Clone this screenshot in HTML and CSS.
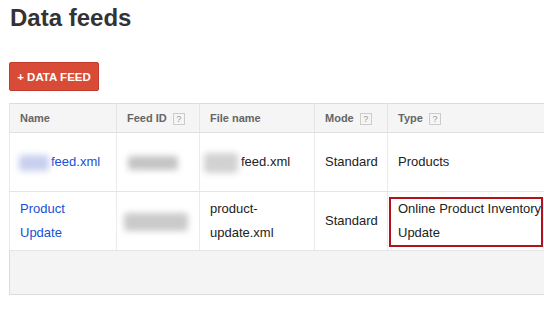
FILE: index.html
```html
<!DOCTYPE html>
<html>
<head>
<meta charset="utf-8">
<link rel="stylesheet" href="styles.css">
</head>
<body>
<div class="page">
  <h1 class="title">Data feeds</h1>
  <button class="add-btn">+ DATA FEED</button>
  <div class="table-clip">
  <table class="feeds">
    <colgroup>
      <col class="c-name"><col class="c-id"><col class="c-file"><col class="c-mode"><col class="c-type">
    </colgroup>
    <thead>
      <tr>
        <th>Name</th>
        <th>Feed ID <span class="help">?</span></th>
        <th>File name</th>
        <th>Mode <span class="help">?</span></th>
        <th>Type <span class="help">?</span></th>
      </tr>
    </thead>
    <tbody>
      <tr class="row">
        <td><span class="blob blob-name"></span><a class="link" href="#">feed.xml</a></td>
        <td><span class="blob blob-id"></span></td>
        <td><span class="blob blob-file"></span>feed.xml</td>
        <td>Standard</td>
        <td>Products</td>
      </tr>
      <tr class="row">
        <td class="wrap"><a class="link" href="#">Product Update</a></td>
        <td><span class="blob blob-id2"></span></td>
        <td class="wrap">product-update.xml</td>
        <td>Standard</td>
        <td class="wrap type-cell"><div class="type-text">Online Product Inventory Update</div><div class="highlight"></div></td>
      </tr>
      <tr class="footer-row">
        <td colspan="5"></td>
      </tr>
    </tbody>
  </table>
  </div>
</div>
</body>
</html>
```
FILE: styles.css
```css
html, body {
  margin: 0;
  padding: 0;
  background: #fff;
  overflow: hidden;
}
body {
  font-family: "Liberation Sans", Arial, sans-serif;
  color: #222;
}
.page {
  padding-left: 9px;
  width: 535px;
  overflow: hidden;
}
.title {
  margin: 4px 0 0 1px;
  font-size: 24px;
  line-height: 28px;
  font-weight: bold;
  color: #333;
}
.add-btn {
  display: block;
  margin-top: 30px;
  width: 90px;
  height: 29px;
  padding: 0;
  border: 1px solid #c43c2b;
  border-radius: 2px;
  background: #d84b37;
  color: #fff;
  font-family: "Liberation Sans", Arial, sans-serif;
  font-size: 11.5px;
  font-weight: bold;
  text-align: center;
}
.table-clip {
  margin-top: 12px;
  width: 535px;
  overflow: hidden;
}
.feeds {
  border-collapse: collapse;
  border: 1px solid #dcdcdc;
  table-layout: fixed;
  width: 600px;
  font-size: 13px;
}
.c-name { width: 107px; }
.c-id { width: 83px; }
.c-file { width: 115px; }
.c-mode { width: 73px; }
.c-type { width: 222px; }
.feeds th {
  height: 28px;
  padding: 0 10px;
  background: #f5f5f5;
  border-left: 1px solid #e5e5e5;
  border-bottom: 1px solid #e0e0e0;
  text-align: left;
  font-size: 11px;
  font-weight: bold;
  color: #666;
  white-space: nowrap;
}
.help {
  display: inline-block;
  width: 10px;
  height: 10px;
  line-height: 10px;
  margin-left: 3px;
  border: 1px solid #ccc;
  font-size: 9px;
  font-weight: normal;
  color: #999;
  text-align: center;
  vertical-align: 0px;
}
.row td {
  height: 58px;
  padding: 0 10px;
  border-left: 1px solid #ebebeb;
  border-bottom: 1px solid #e5e5e5;
  line-height: 24px;
  vertical-align: middle;
  white-space: nowrap;
}
.row td.wrap {
  white-space: normal;
}
.type-cell {
  position: relative;
}
.type-text {
  width: 146px;
}
.highlight {
  position: absolute;
  left: 1px;
  top: 5px;
  width: 150px;
  height: 46px;
  border: 2px solid #b3121d;
}
.link {
  color: #1a4fd6;
  text-decoration: none;
}
.blob {
  display: inline-block;
  vertical-align: middle;
  filter: blur(3px);
  border-radius: 3px;
}
.blob-name {
  width: 30px;
  height: 16px;
  margin-left: -1px;
  margin-right: 2px;
  background: #c8d0ee;
}
.blob-id {
  width: 50px;
  height: 14px;
  margin-left: 1px;
  background: #c4c4c4;
}
.blob-file {
  width: 34px;
  height: 20px;
  margin-left: -6px;
  margin-right: 3px;
  background: #d2d2d2;
}
.blob-id2 {
  width: 64px;
  height: 18px;
  margin-left: -3px;
  background: #cacaca;
}
.footer-row td {
  height: 43px;
  padding: 0;
  background: #f4f4f4;
  border-bottom: 1px solid #dcdcdc;
}
```
